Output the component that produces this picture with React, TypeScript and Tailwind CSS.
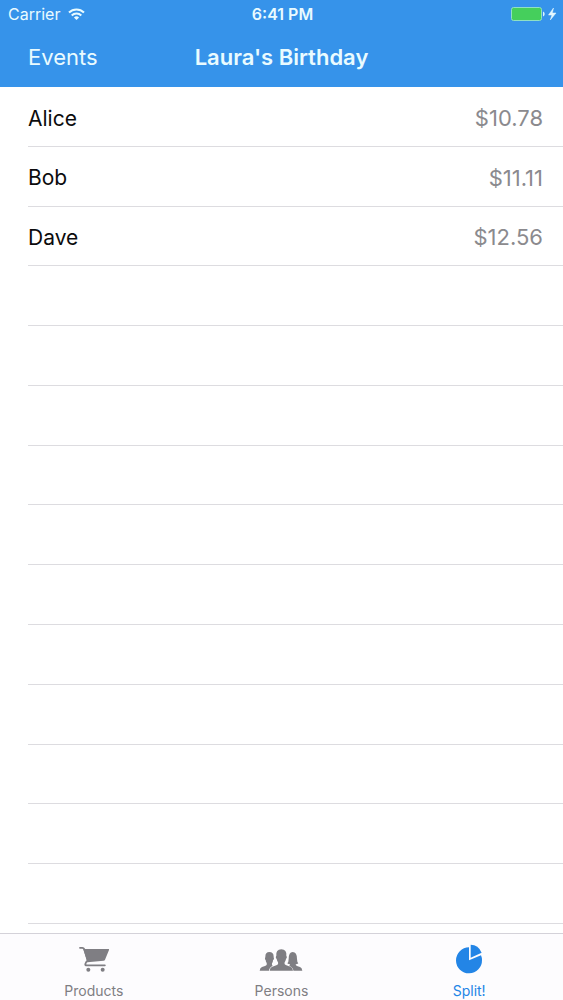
const people = [
  { name: 'Alice', amount: '$10.78' },
  { name: 'Bob', amount: '$11.11' },
  { name: 'Dave', amount: '$12.56' },
];

const ROW_COUNT = 14;

function WifiIcon() {
  return (
    <svg viewBox="0 0 17 13" className="h-[13px] w-[17px]" fill="none" stroke="currentColor" strokeWidth="2" aria-hidden="true">
      <path d="M1 4.500a10.600 10.600 0 0 1 15 0" />
      <path d="M3.700 7.500a6.800 6.800 0 0 1 9.600 0" />
      <path d="M8.500 12 5.900 9.500a3.700 3.700 0 0 1 5.200 0z" fill="currentColor" stroke="none" />
    </svg>
  );
}

function BatteryIcon() {
  return (
    <svg viewBox="0 0 46 14" className="h-[14px] w-[46px]" aria-hidden="true">
      <rect x="0.5" y="0.5" width="30" height="13" rx="2" fill="#45cf5c" stroke="#8fe0c4" />
      <path d="M32 4.500c2.200.8 2.200 4.200 0 5z" fill="#d9f5ff" />
      <path d="M42.500 1 37.500 8h3.400l-1.600 5 5.700-7h-3.700z" fill="#e4f8ff" stroke="#e4f8ff" strokeWidth="0.5" />
    </svg>
  );
}

function CartIcon() {
  return (
    <svg viewBox="84 78 96 81" className="h-[27px] w-8" aria-hidden="true">
      <path
        d="M90 83.500h7q4 0 5.500 4l11 34-5 5q-4 7-2 8.500 1 1 4 1h54"
        fill="none"
        stroke="currentColor"
        strokeWidth="5.500"
        strokeLinecap="round"
        strokeLinejoin="round"
      />
      <path d="M100 87h76q2 0 1 3l-12 29q-1 3-4 3l-49 5z" fill="currentColor" />
      <circle cx="115" cy="149" r="6" fill="currentColor" />
      <circle cx="158" cy="149" r="6" fill="currentColor" />
    </svg>
  );
}

function PeopleIcon() {
  return (
    <svg viewBox="58 83 132 69" className="h-[23px] w-11" fill="currentColor" aria-hidden="true">
      <path d="M60 151q1-9 7-11l9-3q7-2 5-9-3-4-3-9-3-2-2-6 1-1 1-4 0-14 12-14 13 0 13 14 0 3 1 5 0 4-3 6 0 6-3 9-1 5 2 8-9 3-11 14z" />
      <path d="M188 151q-1-9-7-11l-9-3q-4-2-4-5 5 0 8-3-4-4-4-13 0-21-13-21-12 0-12 21 0 9-4 13 3 3 8 3 0 4-4 6 12 4 14 13z" />
      <path
        d="M90 151q1-10 8-12l12-4q7-2 5-9-3-4-4-10-4-3-2-8l1-1q-2-20 15-20t15 20l1 1q2 5-2 8-1 6-4 10-2 7 5 9l12 4q7 2 8 12z"
        stroke="#fdfcfe"
        strokeWidth="2"
        paintOrder="stroke"
      />
    </svg>
  );
}

function PieIcon() {
  return (
    <svg viewBox="87 72 84 90" className="h-[30px] w-7" fill="currentColor" aria-hidden="true">
      <path d="M129 82v39l36-15q3 7 3 14a39 39 0 1 1-39-38z" />
      <path d="M134 74q23 0 33 24l-33 15z" />
    </svg>
  );
}

const tabs = [
  { label: 'Products', Icon: CartIcon, active: false },
  { label: 'Persons', Icon: PeopleIcon, active: false },
  { label: 'Split!', Icon: PieIcon, active: true },
];

export default function App() {
  return (
    <div className="flex min-h-screen flex-col bg-white font-['Inter',sans-serif]">
      <header className="bg-[#3693ea] text-[#e9fbff]">
        <div className="grid h-7 grid-cols-[1fr_auto_1fr] items-center pl-2 pr-1.5 text-base">
          <div className="flex items-center gap-2">
            <span>Carrier</span>
            <WifiIcon />
          </div>
          <time className="text-center font-semibold">6:41 PM</time>
          <div className="flex justify-end">
            <BatteryIcon />
          </div>
        </div>
        <nav className="grid h-[59px] grid-cols-[1fr_auto_1fr] items-center px-7 text-[22px]">
          <a href="#events" className="justify-self-start">Events</a>
          <h1 className="font-semibold">Laura's Birthday</h1>
        </nav>
      </header>

      <main className="flex flex-1 flex-col pb-[9px]">
        <ul className="flex flex-1 flex-col pl-7">
          {Array.from({ length: ROW_COUNT }, (_, i) => {
            const person = people[i];
            return (
              <li
                key={i}
                aria-hidden={!person}
                className="flex min-h-11 flex-1 basis-0 items-center justify-between border-b border-[#dddce0] pt-1 pr-5"
              >
                {person && (
                  <>
                    <span className="text-[21px] text-[#0c0c0d]">{person.name}</span>
                    <span className="text-[22px] text-[#8b8a8e]">{person.amount}</span>
                  </>
                )}
              </li>
            );
          })}
        </ul>
      </main>

      <nav className="grid h-[67px] grid-cols-3 border-t border-[#d4d2d9] bg-[#fdfcfe]">
        {tabs.map(({ label, Icon, active }) => (
          <button
            key={label}
            type="button"
            aria-current={active ? 'page' : undefined}
            className={`flex flex-col items-center ${active ? 'text-[#2385e6]' : 'text-[#7f7e83]'}`}
          >
            <span className="flex h-[50px] items-center">
              <Icon />
            </span>
            <span className="text-sm leading-[14px]">{label}</span>
          </button>
        ))}
      </nav>
    </div>
  );
}
